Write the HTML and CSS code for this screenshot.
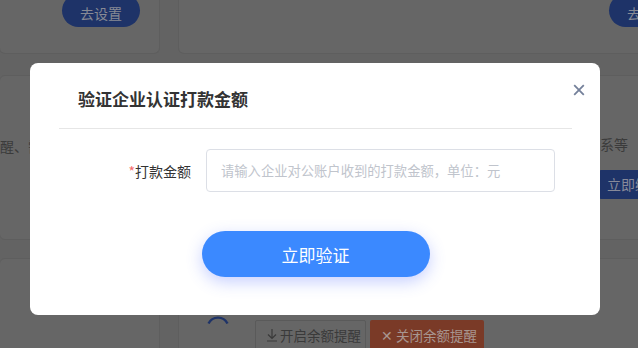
FILE: index.html
```html
<!DOCTYPE html>
<html lang="zh">
<head>
<meta charset="utf-8">
<title>验证企业认证打款金额</title>
<link rel="stylesheet" href="styles.css">
</head>
<body>
<div class="page">
  <div class="row row1">
    <div class="card c-left">
      <span class="pill">去设置</span>
    </div>
    <div class="card c-right">
      <span class="pill pill-right">去设置</span>
    </div>
  </div>
  <div class="row row2">
    <div class="card c-half">
      <p class="bg-text">醒、需要及时处理的重要事项</p>
    </div>
    <div class="card c-half c-end">
      <p class="bg-text right">如有疑问请及时联系等</p>
      <span class="bind-btn">立即绑定</span>
    </div>
  </div>
  <div class="row row3">
    <div class="card c-left tall"></div>
    <div class="card c-right tall bottom-card">
      <svg class="arc" viewBox="0 0 22 10" width="22" height="10"><path d="M1.5 9.5A10.6 10.6 0 0 1 20.5 9.5" fill="none" stroke="#1e3368" stroke-width="2.4"/></svg>
      <div class="actions">
        <span class="act act-open"><svg class="ico" viewBox="0 0 12 14" width="12" height="14"><path d="M6 1v9M2 6.5L6 10.5 10 6.5M1 13h10" fill="none" stroke="#3a3a3a" stroke-width="1.2"/></svg>开启余额提醒</span>
        <span class="act act-close">✕ 关闭余额提醒</span>
      </div>
    </div>
  </div>
</div>

<div class="modal">
  <button class="close" aria-label="关闭"><svg viewBox="0 0 12 12" width="12" height="12"><path d="M1.2 1.2l9.6 9.6M10.8 1.2l-9.6 9.6" stroke="#74809a" stroke-width="1.8" fill="none"/></svg></button>
  <div class="modal-head">
    <h2 class="modal-title">验证企业认证打款金额</h2>
  </div>
  <div class="form-row">
    <label class="form-label"><span class="req">*</span>打款金额</label>
    <input class="form-input" type="text" placeholder="请输入企业对公账户收到的打款金额，单位：元">
  </div>
  <div class="btn-wrap">
    <button class="primary">立即验证</button>
  </div>
</div>
</body>
</html>
```

FILE: styles.css
```css
* { box-sizing: border-box; }
html, body {
  margin: 0;
  padding: 0;
}
body {
  width: 638px;
  height: 348px;
  overflow: hidden;
  background: #636363;
  font-family: "Noto Sans CJK SC", "Noto Sans", sans-serif;
}
.page {
  width: 638px;
  height: 348px;
  overflow: hidden;
}
.row {
  display: flex;
  gap: 18px;
}
.card {
  background: #666666;
  border: 1px solid #5e5e5e;
  border-radius: 6px;
}
.row1 {
  height: 54px;
}
.row1 .card {
  border-top: none;
  border-radius: 0 0 6px 6px;
  height: 54px;
}
.c-left {
  width: 161px;
  margin-left: -1px;
  flex: none;
}
.c-right {
  flex: 1;
  margin-right: -10px;
}
.row1 .c-left {
  display: flex;
  justify-content: flex-end;
  padding-right: 19px;
}
.row1 .c-right {
  display: flex;
  justify-content: flex-end;
}
.pill {
  display: flex;
  align-items: center;
  justify-content: center;
  width: 78px;
  height: 33px;
  margin-top: -6px;
  padding-top: 5px;
  border-radius: 17px;
  background: #1e3368;
  color: #878a94;
  font-size: 14px;
}
.pill-right {
  margin-right: -40px;
}
.row2 {
  margin-top: 21px;
  height: 165px;
}
.c-half {
  flex: 1;
  height: 165px;
  overflow: hidden;
}
.row2 .c-half:first-child {
  margin-left: -1px;
}
.row2 .c-end {
  margin-right: -10px;
  display: flex;
  flex-direction: column;
  align-items: flex-end;
}
.bg-text {
  margin: 58px 0 0 0;
  font-size: 14px;
  line-height: 24px;
  color: #3b3b3b;
  white-space: nowrap;
}
.bg-text.right {
  margin-top: 56px;
  padding-right: 19px;
}
.bind-btn {
  margin-top: 14px;
  margin-right: -30px;
  width: 78px;
  height: 29px;
  background: #1e3368;
  color: #878a9a;
  font-size: 14px;
  line-height: 29px;
  padding-left: 8px;
  border-radius: 2px;
}
.row3 {
  margin-top: 18px;
}
.tall {
  height: 120px;
}
.bottom-card {
  display: flex;
  align-items: flex-start;
}
.arc {
  display: block;
  flex: none;
  margin: 55px 0 0 28px;
}
.actions {
  display: flex;
  gap: 4px;
  margin: 61px 0 0 26px;
}
.act {
  display: flex;
  align-items: center;
  height: 30px;
  font-size: 13.5px;
  white-space: nowrap;
  border-radius: 2px;
}
.act-open {
  width: 111px;
  border: 1px solid #5a5a5a;
  color: #3a3a3a;
  padding-left: 10px;
}
.ico {
  margin-right: 2px;
}
.act-close {
  width: 114px;
  background: #7a3a27;
  color: #a8958f;
  padding-left: 11px;
}

/* modal */
.modal {
  position: fixed;
  left: 30px;
  top: 63px;
  width: 570px;
  height: 252px;
  background: #ffffff;
  border-radius: 8px;
  padding: 0 28px 0 29px;
}
.close {
  position: absolute;
  top: 21px;
  right: 15px;
  width: 12px;
  height: 12px;
  padding: 0;
  border: none;
  background: none;
  display: block;
}
.close svg { display: block; }
.modal-head {
  padding: 24px 0 17px 19px;
  border-bottom: 1px solid #e6e6e6;
}
.modal-title {
  margin: 0;
  font-size: 17px;
  line-height: 24px;
  font-weight: 700;
  color: #333333;
}
.form-row {
  display: flex;
  align-items: center;
  margin-top: 20px;
}
.form-label {
  width: 133px;
  text-align: right;
  font-size: 14px;
  color: #333333;
  padding-right: 1px;
}
.req {
  color: #f56c6c;
}
.form-input {
  margin-left: 14px;
  width: 349px;
  height: 43px;
  border: 1px solid #dcdfe6;
  border-radius: 4px;
  padding: 0 14px;
  font-family: inherit;
  font-size: 13.3px;
  color: #333;
  outline: none;
}
.form-input::placeholder {
  color: #c0c4cc;
}
.btn-wrap {
  display: flex;
  justify-content: center;
  margin-top: 39px;
}
.primary {
  width: 228px;
  height: 46px;
  border: none;
  border-radius: 23px;
  background: #3b89ff;
  color: #ffffff;
  font-family: inherit;
  font-size: 17px;
  box-shadow: 0 5px 16px rgba(70, 100, 255, 0.3);
}
```
